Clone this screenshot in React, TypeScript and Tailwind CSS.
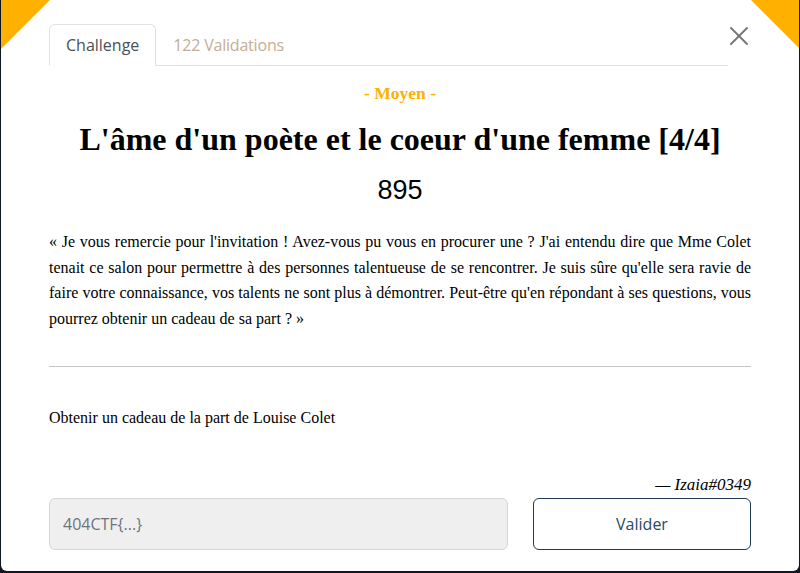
import { X } from "lucide-react";

const serif = "font-['Liberation_Serif','Times_New_Roman',serif]";
const ui = "font-['Open_Sans','Noto_Sans',sans-serif]";

export default function App() {
  return (
    <div className="w-[800px] h-[573px] bg-[#0f1722] px-px pb-[2px]">
      <div className="relative h-full bg-white rounded-b-md overflow-hidden">
        {/* corner ribbons */}
        <div className="absolute top-0 left-0 w-[49px] h-[49px] bg-[#ffb000] [clip-path:polygon(0_0,100%_0,0_100%)]" />
        <div className="absolute top-0 right-0 w-[48px] h-[48px] bg-[#ffb000] [clip-path:polygon(0_0,100%_0,100%_100%)]" />

        <button className="absolute top-[20px] right-[44px] text-[#777] p-0">
          <X className="w-[32px] h-[32px]" strokeWidth={1.5} />
        </button>

        <div className="px-12 pt-6">
          {/* tabs */}
          <div className={`flex mr-[23px] border-b border-[#dee2e6] text-[16px] ${ui}`}>
            <div className="-mb-px px-4 h-[42px] flex items-center border border-[#dee2e6] border-b-white rounded-t-md bg-white text-[#495057]">
              Challenge
            </div>
            <div className="px-[17px] h-[41px] flex items-center text-[#c4ad94] tracking-[-0.2px]">122 Validations</div>
          </div>

          <p className={`${serif} mt-[15px] text-center text-[17.5px] font-bold text-[#ffb000] leading-[24px]`}>- Moyen -</p>
          <h1 className={`${serif} mt-[14px] text-center text-[32px] font-bold text-black leading-[40px]`}>
            L'âme d'un poète et le coeur d'une femme [4/4]
          </h1>
          <p className="mt-[13px] text-center text-[27px] leading-[36px] text-black font-['Liberation_Sans',Arial,sans-serif]">895</p>

          <p className={`${serif} mt-[21px] text-[16px] leading-[25.6px] text-black text-justify`}>
            « Je vous remercie pour l'invitation ! Avez-vous pu vous en procurer une ? J'ai entendu dire que Mme Colet
            tenait ce salon pour permettre à des personnes talentueuse de se rencontrer. Je suis sûre qu'elle sera ravie de
            faire votre connaissance, vos talents ne sont plus à démontrer. Peut-être qu'en répondant à ses questions, vous
            pourrez obtenir un cadeau de sa part ? »
          </p>

          <hr className="mt-[35px] border-t border-[#c4c4c4]" />

          <p className={`${serif} mt-[41px] text-[16px] leading-[20px] text-black`}>Obtenir un cadeau de la part de Louise Colet</p>

          <p className={`${serif} mt-[47px] text-right italic text-[17px] leading-[20px] text-black`}>— Izaia#0349</p>

          <div className="mt-[3px] flex gap-[25px]">
            <input
              placeholder="404CTF{...}"
              className={`${ui} flex-1 h-[52px] px-[13px] rounded-md bg-[#efefef] border border-[#d3d7db] text-[16px] placeholder:text-[#6c757d] outline-none`}
            />
            <button className={`${ui} w-[218px] h-[52px] rounded-md border border-[#1d3a52] text-[#2a4a62] text-[16px] bg-white`}>
              Valider
            </button>
          </div>
        </div>
      </div>
    </div>
  );
}
